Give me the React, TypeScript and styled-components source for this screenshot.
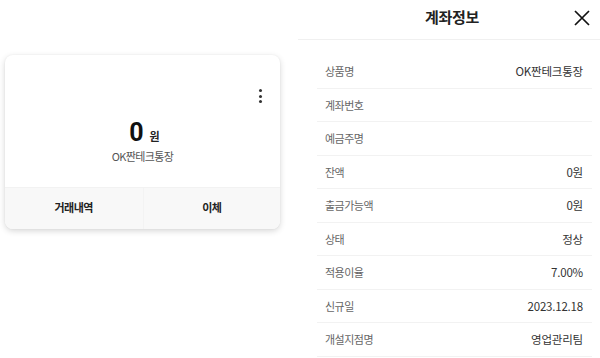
import React from "react";
import { styled, createGlobalStyle } from "styled-components";

type InfoRow = { label: string; value?: string };

const rows: InfoRow[] = [
  { label: "상품명", value: "OK짠테크통장" },
  { label: "계좌번호" },
  { label: "예금주명" },
  { label: "잔액", value: "0원" },
  { label: "출금가능액", value: "0원" },
  { label: "상태", value: "정상" },
  { label: "적용이율", value: "7.00%" },
  { label: "신규일", value: "2023.12.18" },
  { label: "개설지점명", value: "영업관리팀" },
];

const GlobalStyle = createGlobalStyle`
  html, body {
    margin: 0;
    padding: 0;
    background: #ffffff;
  }
  body {
    font-family: "Noto Sans CJK KR", "Noto Sans", sans-serif;
    color: #222;
  }
`;

const App = () => {
  return (
    <>
      <GlobalStyle />
      <StPage>
        <StLeft>
          <StCard>
            <StCardBody>
              <StMenuRow>
                <StKebab aria-label="더보기">
                  <span />
                  <span />
                  <span />
                </StKebab>
              </StMenuRow>
              <StAmount>
                <StAmountNum>0</StAmountNum>
                <StAmountUnit>원</StAmountUnit>
              </StAmount>
              <StProductName>OK짠테크통장</StProductName>
            </StCardBody>
            <StCardFooter>
              <StFooterButton type="button">거래내역</StFooterButton>
              <StFooterButton type="button" $divider>
                이체
              </StFooterButton>
            </StCardFooter>
          </StCard>
        </StLeft>

        <StRight>
          <StHeader>
            <span />
            <StTitle>계좌정보</StTitle>
            <StClose type="button" aria-label="닫기">
              <svg width="16" height="16" viewBox="0 0 16 16">
                <path
                  d="M1 1 L15 15 M15 1 L1 15"
                  stroke="#111"
                  strokeWidth="1.7"
                  fill="none"
                />
              </svg>
            </StClose>
          </StHeader>
          <StList>
            {rows.map(({ label, value }) => (
              <StRow key={label}>
                <StLabel>{label}</StLabel>
                <StValue>{value}</StValue>
              </StRow>
            ))}
          </StList>
        </StRight>
      </StPage>
    </>
  );
};

const StPage = styled.div`
  width: 600px;
  height: 358px;
  display: flex;
  overflow: hidden;
`;

const StLeft = styled.div`
  width: 298px;
  padding: 55px 0 0 5px;
  box-sizing: border-box;
`;

const StCard = styled.div`
  width: 275px;
  border-radius: 8px;
  background: #fff;
  box-shadow: 0 2px 6px rgba(0, 0, 0, 0.16), 0 0 2px rgba(0, 0, 0, 0.05);
  overflow: hidden;
`;

const StCardBody = styled.div`
  height: 132px;
  box-sizing: border-box;
  padding: 34px 18px 0 18px;
  display: flex;
  flex-direction: column;
  align-items: center;
`;

const StMenuRow = styled.div`
  align-self: stretch;
  display: flex;
  justify-content: flex-end;
  height: 14px;
`;

const StKebab = styled.button`
  width: 4px;
  height: 14px;
  padding: 0;
  border: none;
  background: none;
  display: flex;
  flex-direction: column;
  justify-content: space-between;
  align-items: center;
  span {
    width: 3px;
    height: 3px;
    border-radius: 50%;
    background: #333;
  }
`;

const StAmount = styled.div`
  margin-top: 17px;
  display: flex;
  align-items: baseline;
  gap: 6px;
  margin-left: 4px;
`;

const StAmountNum = styled.span`
  font-family: "Roboto", "Noto Sans", sans-serif;
  font-size: 25px;
  font-weight: 700;
  line-height: 26px;
  color: #111;
`;

const StAmountUnit = styled.span`
  font-size: 11px;
  font-weight: 700;
  color: #222;
`;

const StProductName = styled.div`
  margin-top: 3px;
  font-size: 11px;
  letter-spacing: -0.6px;
  line-height: 14px;
  color: #555;
`;

const StCardFooter = styled.div`
  height: 41px;
  display: grid;
  grid-template-columns: 1fr 1fr;
  background: #f8f8f8;
  border-top: 1px solid #f2f2f2;
`;

const StFooterButton = styled.button<{ $divider?: boolean }>`
  border: none;
  background: none;
  padding: 0 0 4px 0;
  font-family: "Noto Sans CJK KR", sans-serif;
  font-size: 11px;
  font-weight: 700;
  letter-spacing: -0.5px;
  color: #222;
  border-left: ${({ $divider }) => ($divider ? "1px solid #f3f3f3" : "none")};
`;

const StRight = styled.div`
  flex: 1;
  display: flex;
  flex-direction: column;
`;

const StHeader = styled.div`
  height: 39px;
  display: grid;
  grid-template-columns: 1fr auto 1fr;
  align-items: center;
  padding: 0 10px 0 16px;
  border-bottom: 1px solid #f0f0f0;
`;

const StTitle = styled.h1`
  margin: 0 0 7px 0;
  font-size: 15px;
  font-weight: 700;
  letter-spacing: -0.3px;
  color: #222;
`;

const StClose = styled.button`
  justify-self: end;
  width: 16px;
  height: 16px;
  padding: 0;
  margin-bottom: 4px;
  border: none;
  background: none;
  display: flex;
`;

const StList = styled.div`
  margin: 15px 8px 0 19px;
  display: flex;
  flex-direction: column;
`;

const StRow = styled.div`
  height: 33.5px;
  box-sizing: border-box;
  display: flex;
  justify-content: space-between;
  align-items: center;
  padding: 0 9px 0 8px;
  border-bottom: 1px solid #f2f2f2;
`;

const StLabel = styled.span`
  font-size: 11px;
  letter-spacing: -0.5px;
  color: #666;
`;

const StValue = styled.span`
  font-size: 11.5px;
  letter-spacing: -0.2px;
  color: #333;
`;

export default App;
